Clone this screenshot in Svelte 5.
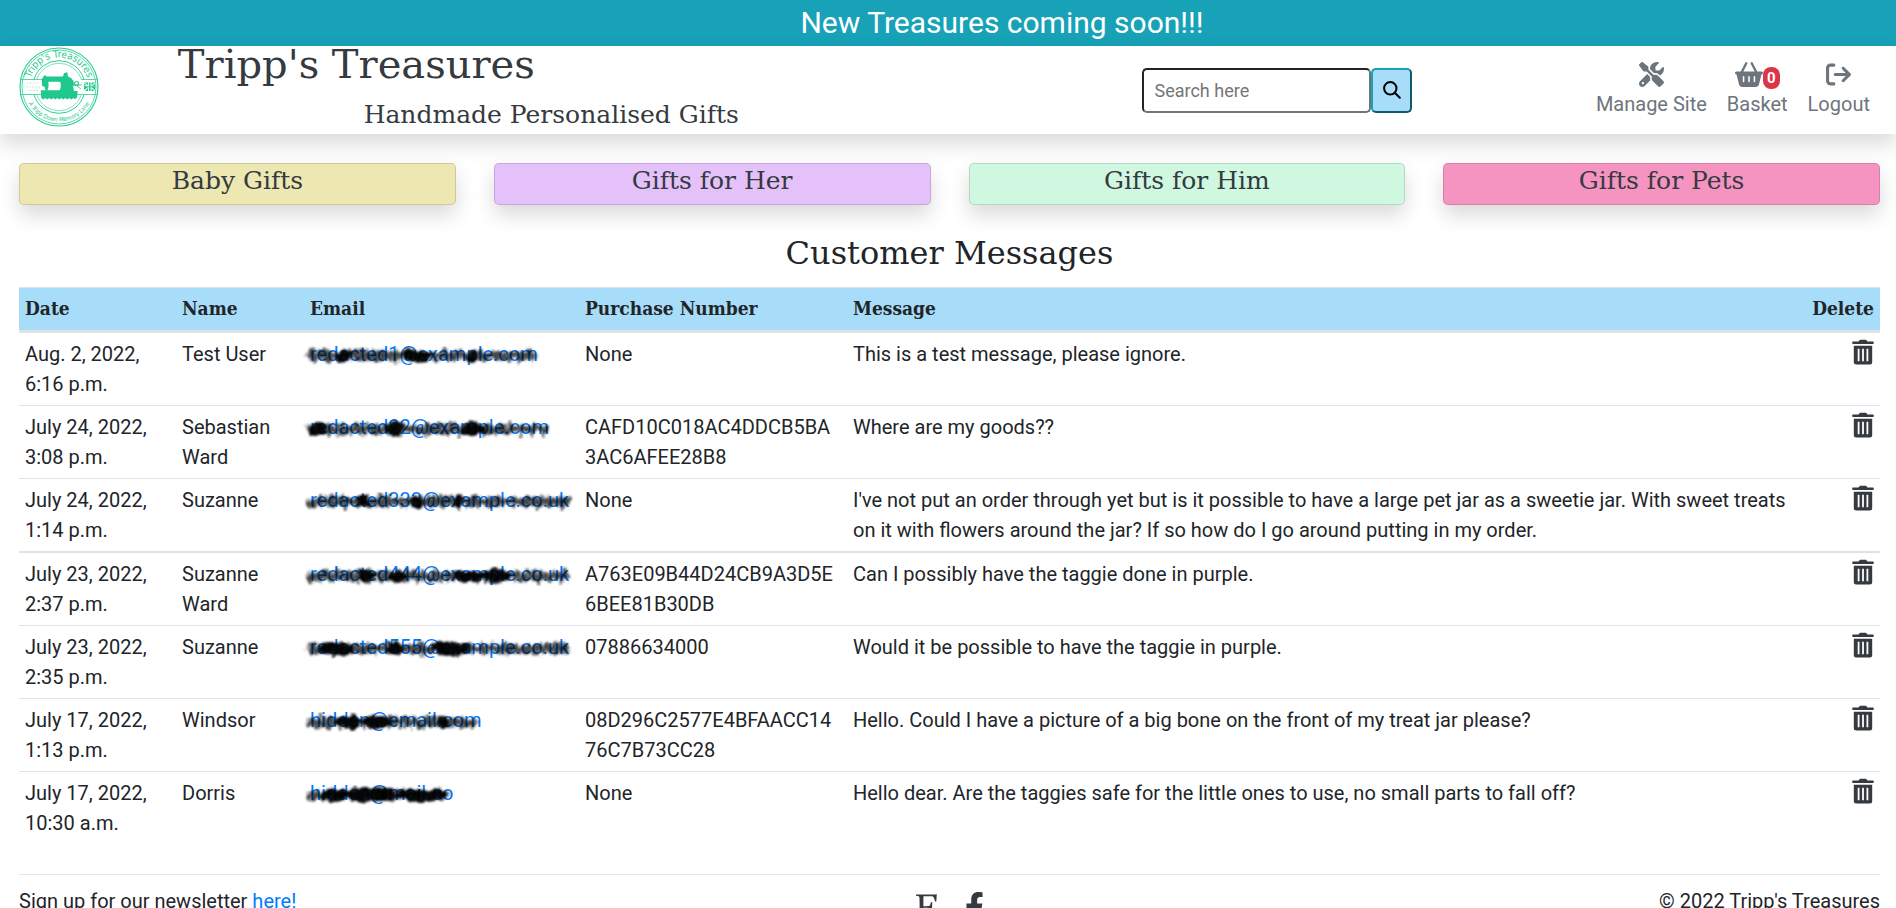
<script>
  const categories = [
    { label: 'Baby Gifts', tone: 'baby' },
    { label: 'Gifts for Her', tone: 'her' },
    { label: 'Gifts for Him', tone: 'him' },
    { label: 'Gifts for Pets', tone: 'pets' },
  ];

  // smear: width of the ink; blobs: [centre, half-width] of its darkest parts
  const messages = [
    { day: 'Aug. 2, 2022,', time: '6:16 p.m.', name: 'Test User', email: 'redacted1@example.com', smear: 238, blobs: [[36, 8], [110, 14], [165, 5]], ref: 'None', text: 'This is a test message, please ignore.' },
    { day: 'July 24, 2022,', time: '3:08 p.m.', name: 'Sebastian Ward', email: 'redacted22@example.com', smear: 248, blobs: [[10, 10], [86, 9], [165, 12]], ref: 'CAFD10C018AC4DDCB5BA3AC6AFEE28B8', text: 'Where are my goods??' },
    { day: 'July 24, 2022,', time: '1:14 p.m.', name: 'Suzanne', email: 'redacted333@example.co.uk', smear: 272, blobs: [[55, 6], [108, 6], [150, 5]], ref: 'None', text: "I've not put an order through yet but is it possible to have a large pet jar as a sweetie jar. With sweet treats on it with flowers around the jar? If so how do I go around putting in my order." },
    { day: 'July 23, 2022,', time: '2:37 p.m.', name: 'Suzanne Ward', email: 'redacted444@example.co.uk', smear: 270, blobs: [[60, 8], [90, 8], [160, 14], [186, 16]], ref: 'A763E09B44D24CB9A3D5E6BEE81B30DB', text: 'Can I possibly have the taggie done in purple.' },
    { day: 'July 23, 2022,', time: '2:35 p.m.', name: 'Suzanne', email: 'redacted555@example.co.uk', smear: 270, blobs: [[28, 16], [88, 7], [146, 16], [130, 6]], ref: '07886634000', text: 'Would it be possible to have the taggie in purple.' },
    { day: 'July 17, 2022,', time: '1:13 p.m.', name: 'Windsor', email: 'hidden@email.com', smear: 178, blobs: [[40, 12], [68, 14], [135, 6]], ref: '08D296C2577E4BFAACC1476C7B73CC28', text: 'Hello. Could I have a picture of a big bone on the front of my treat jar please?' },
    { day: 'July 17, 2022,', time: '10:30 a.m.', name: 'Dorris', email: 'hidden@mail.co', smear: 150, blobs: [[26, 13], [56, 22], [80, 8], [114, 26]], ref: 'None', text: 'Hello dear. Are the taggies safe for the little ones to use, no small parts to fall off?' },
  ];

  function scribble(width, seed) {
    let d = 'M8 18';
    for (let x = 10, i = 0; x < width; x += 3, i++) {
      const swing = 3 + ((i * 7 + seed * 5) % 4);
      d += ` L${x} ${i % 2 ? 18 - swing : 18 + swing}`;
    }
    return d;
  }
</script>

<div class="banner">New Treasures coming soon!!!</div>

<header class="top">
  <a class="logo" href="/" aria-label="Tripp's Treasures home">
    <svg viewBox="0 0 80 80" width="80" height="80">
      <defs>
        <path id="arc-top" d="M10.500 40a29.500 29.500 0 0 1 59 0" />
        <path id="arc-low" d="M5.500 40a34.500 34.500 0 0 0 69 0" />
      </defs>
      <g fill="none" stroke="#2fcf93">
        <circle cx="40" cy="40" r="39" stroke-width="1.200" />
        <circle cx="40" cy="40" r="37" stroke-width=".8" />
        <path d="M15 32.500A26 26 0 0 1 65 32.500M15 47.500A26 26 0 0 0 65 47.500" stroke-width="1" />
        <path d="M17.500 32.500A23.700 23.700 0 0 1 62.500 32.500M17.500 47.500A23.700 23.700 0 0 0 62.500 47.500" stroke-width=".6" />
        <path d="M2 32.500h21M2 47.500h20M62 32.500h16M58 47.500h20" stroke-width=".8" />
        <path d="M8 36h12M4 40h18M8 43.500h12" stroke-width=".6" stroke-dasharray="2 1" opacity=".5" />
      </g>
      <g fill="#1fc98b">
        <path d="M24.500 29.500l1.500-1.500 1.500 1.500h16.500l1-3.500 1.500 0v-.500l2 0 .5 4 3 1.500 2.500 3 .5 4-1 1 1 5h3.500v2.500l-.5 4-2 1.800-1.800-1.300-2 1.500-2-1.500-2 1.500-2-1.500-2 1.500-2-1.500-2 1.500-2-1.500-2 1.500-2-1.500-2 1.500-2-1.500-2 1.500-2-1.500-2 1.500-2-1.800-.5-7.500h19l1-3v-4.500l-1.500-1H29.500v5l-1 3.500h-2l-1-3.500-2.500-1v-7z" />
        <path d="M65 35.500h4v2.500zM65 36.500l3 2h-3zM70 35.500h1.500v3.500H70zM76 35.500h-3.500v3zM76 37v2h-3zM65 40.200h4L65 43zM69 41v3h-3zM70 40.200h1.500V44H70zM72.500 40.200H76V43zM72.500 41.500l3 2.500h-3zM64.500 39.200h12v1h-12z" />
      </g>
      <g fill="none" stroke="#1fc98b">
        <circle cx="57.500" cy="36.500" r="2" stroke-width="1.200" /><path d="M54 38h9M58 39l4 3" stroke-width=".8" />
      </g>
      <text class="logo-top"><textPath href="#arc-top" startOffset="50%" text-anchor="middle">Tripp's Treasures</textPath></text>
      <text class="logo-low"><textPath href="#arc-low" startOffset="50%" text-anchor="middle">A Tripp Down Memory Lane</textPath></text>
    </svg>
  </a>

  <div class="brand">
    <h1>Tripp's Treasures</h1>
    <p>Handmade Personalised Gifts</p>
  </div>

  <form class="search" onsubmit={(e) => e.preventDefault()}>
    <input type="text" placeholder="Search here" aria-label="Search here" />
    <button type="submit" aria-label="Search">
      <svg viewBox="0 0 18 18" width="18" height="18" fill="none" stroke="#000" stroke-width="2" stroke-linecap="round">
        <circle cx="7.300" cy="7.300" r="6.200" /><path d="M11.800 11.800L16.800 16.800" />
      </svg>
    </button>
  </form>

  <nav class="account">
    <a href="/manage">
      <span class="icon"><svg viewBox="0 0 512 512" width="25" height="25"><path d="M78.600 5C69.100-2.400 55.600-1.500 47 7L7 47c-8.500 8.500-9.400 22-2.100 31.600l80 104c4.500 5.900 11.600 9.400 19 9.400l54.100 0 109 109c-14.700 29-10 65.400 14.300 89.600l112 112c12.500 12.500 32.800 12.500 45.300 0l64-64c12.500-12.500 12.500-32.800 0-45.300l-112-112c-24.200-24.200-60.600-29-89.600-14.300l-109-109 0-54.100c0-7.500-3.500-14.500-9.400-19L78.600 5zM19.900 396.100C7.200 408.800 0 426.100 0 444.100C0 481.600 30.400 512 67.900 512c18 0 35.300-7.200 48-19.900L233.700 374.300c-7.800-20.900-9-43.600-3.600-65.100l-61.700-61.700L19.900 396.100zM512 144c0-10.500-1.100-20.700-3.200-30.500c-2.400-11.200-16.100-14.100-24.200-6l-63.900 63.900c-3 3-7.100 4.700-11.300 4.700L352 176c-8.800 0-16-7.200-16-16l0-57.400c0-4.200 1.700-8.300 4.700-11.300l63.900-63.900c8.100-8.100 5.200-21.800-6-24.200C388.700 1.100 378.500 0 368 0C288.500 0 224 64.500 224 144l0 .8 85.300 85.300c36-9.100 75.800 .5 104 28.700L429 274.500c49-23 83-72.800 83-130.500zM56 432a24 24 0 1 1 48 0 24 24 0 1 1 -48 0z" /></svg></span>
      <span>Manage Site</span>
    </a>
    <a href="/basket">
      <span class="icon"><svg viewBox="0 0 576 512" width="28" height="25"><path d="M253.300 35.100c6.100-11.800 1.500-26.300-10.200-32.400s-26.300-1.500-32.400 10.200L117.600 192 32 192c-17.700 0-32 14.300-32 32s14.300 32 32 32L83.900 463.500C91 492 116.600 512 146 512L430 512c29.400 0 55-20 62.100-48.500L544 256c17.700 0 32-14.300 32-32s-14.300-32-32-32l-85.600 0L365.300 12.900C359.200 1.200 344.700-3.400 332.900 2.700s-16.300 20.600-10.200 32.400L404.300 192l-232.600 0L253.300 35.100zM192 304l0 96c0 8.800-7.200 16-16 16s-16-7.200-16-16l0-96c0-8.800 7.200-16 16-16s16 7.200 16 16zm96-16c8.800 0 16 7.200 16 16l0 96c0 8.800-7.200 16-16 16s-16-7.200-16-16l0-96c0-8.800 7.200-16 16-16zm128 16l0 96c0 8.800-7.200 16-16 16s-16-7.200-16-16l0-96c0-8.800 7.200-16 16-16s16 7.200 16 16z" /></svg><span class="badge">0</span></span>
      <span>Basket</span>
    </a>
    <a href="/logout">
      <span class="icon"><svg viewBox="0 0 512 512" width="25" height="25"><path d="M502.600 278.600c12.500-12.500 12.500-32.800 0-45.300l-128-128c-12.500-12.500-32.800-12.500-45.300 0s-12.500 32.800 0 45.300L402.700 224 192 224c-17.700 0-32 14.300-32 32s14.300 32 32 32l210.700 0-73.400 73.400c-12.500 12.500-12.500 32.800 0 45.300s32.800 12.500 45.300 0l128-128zM160 96c17.700 0 32-14.300 32-32s-14.300-32-32-32L96 32C43 32 0 75 0 128L0 384c0 53 43 96 96 96l64 0c17.700 0 32-14.300 32-32s-14.300-32-32-32l-64 0c-17.700 0-32-14.300-32-32l0-256c0-17.700 14.300-32 32-32l64 0z" /></svg></span>
      <span>Logout</span>
    </a>
  </nav>
</header>

<main>
  <nav class="categories">
    {#each categories as c}
      <a class={c.tone} href="/gifts">{c.label}</a>
    {/each}
  </nav>

  <h2>Customer Messages</h2>

  <table>
    <colgroup>
      <col class="c-date" /><col class="c-name" /><col class="c-email" /><col class="c-ref" /><col /><col class="c-del" />
    </colgroup>
    <thead>
      <tr><th>Date</th><th>Name</th><th>Email</th><th>Purchase Number</th><th>Message</th><th class="end">Delete</th></tr>
    </thead>
    <tbody>
      {#each messages as m, i}
        <tr>
          <td>{m.day} {m.time}</td>
          <td>{m.name}</td>
          <td>
            <span class="hidden-email">
              <a href="/contact">{m.email}</a>
              <svg class="ink" width={m.smear + 12} height="36" aria-hidden="true">
                <filter id="rough{i}" x="-5%" y="-20%" width="110%" height="140%">
                  <feTurbulence type="fractalNoise" baseFrequency=".12" numOctaves="2" seed={i + 3} />
                  <feDisplacementMap in="SourceGraphic" scale="10" xChannelSelector="R" yChannelSelector="G" />
                  <feGaussianBlur stdDeviation="1.100" />
                </filter>
                <g filter="url(#rough{i})">
                  <path d={scribble(m.smear, i)} fill="none" stroke="#000" stroke-width="3" stroke-linejoin="round" opacity=".6" />
                  <path d="M10 18H{m.smear - 4}" stroke="#000" stroke-width="9" stroke-linecap="round" opacity=".35" />
                  {#each m.blobs as [x, r]}
                    <ellipse cx={x + 8} cy="18" rx={r} ry="7" opacity=".9" />
                  {/each}
                </g>
              </svg>
            </span>
          </td>
          <td class="ref">{m.ref}</td>
          <td>{m.text}</td>
          <td class="end">
            <button class="delete" aria-label="Delete message">
              <svg viewBox="0 0 22 26" width="22" height="26" fill="#343a40">
                <path d="M1 2.500h5.500L8 .8h6l1.500 1.700H21q.8 0 .8 1.200T21 5H1Q.2 5 .2 3.700T1 2.500z" />
                <path fill-rule="evenodd" d="M1.800 6.800h18.400V23q0 2.500-2.500 2.500H4.300Q1.800 25.500 1.800 23zM5.700 9.800v12.400h1.800V9.800zM10.100 9.800v12.400h1.800V9.800zM14.500 9.800v12.400h1.800V9.800z" />
              </svg>
            </button>
          </td>
        </tr>
      {/each}
    </tbody>
  </table>

  <footer>
    <p>Sign up for our newsletter <a href="/newsletter">here!</a></p>
    <div class="social">
      <a href="/etsy" aria-label="Etsy"><svg viewBox="0 0 384 512" width="22" height="30"><path d="M384 348c-1.750 10.750-13.750 110-15.500 132-117.879-4.299-219.895-4.743-368.500 0v-25.500c45.457-8.948 60.627-8.019 61-35.250 1.793-72.322 3.524-244.143 0-322-1.029-28.460-12.130-26.765-61-36v-25.500c73.886 2.358 255.933 8.551 362.999-3.750-3.500 38.250-7.750 126.500-7.750 126.500H332C320.947 115.665 313.241 68 277.250 68h-137c-10.250 0-10.750 3.500-10.750 9.750V241.500c58 .5 88.500-2.500 88.500-2.500 29.770-.951 27.560-8.502 40.750-65.251h25.750c-4.407 101.351-3.910 61.829-1.750 160.250H257c-9.155-40.086-9.065-61.045-39.501-61.500 0 0-21.500-2-88-2v139c0 26 14.250 38.250 44.250 38.250H263c63.636 0 66.564-24.996 98.751-99.750H384z" /></svg></a>
      <a href="/facebook" aria-label="Facebook"><svg viewBox="0 0 320 512" width="19" height="30"><path d="M279.140 288l14.220-92.660h-88.910v-60.130c0-25.350 12.420-50.060 52.240-50.060h40.420V6.260S260.430 0 225.360 0c-73.220 0-121.080 44.380-121.080 124.720v70.620H22.890V288h81.390v224h100.170V288z" /></svg></a>
    </div>
    <p class="copy">© 2022 Tripp's Treasures</p>
  </footer>
</main>

<style>
  :global(body) {
    margin: 0;
    background: #fff;
    color: #212529;
    font: 20px/30px Roboto, sans-serif;
  }
  a { text-decoration: none; color: #007bff; }
  h1, h2, p { margin: 0; font-weight: 400; }
  svg { display: block; }

  .banner {
    background: #17a2b8;
    color: #fff;
    text-align: center;
    font-size: 30px;
    line-height: 46px;
    padding-left: 108px;
  }

  .top {
    display: grid;
    grid-template-columns: 1fr 5fr 3fr 3fr;
    min-height: 88px;
    padding: 0 19px;
    box-shadow: 0 10px 20px rgba(0, 0, 0, .15);
  }
  .logo { width: 80px; padding-top: 1px; }
  .logo-top, .logo-low { fill: #1fc98b; font-family: "DejaVu Sans Condensed", "DejaVu Sans", sans-serif; }
  .logo-top { font-size: 10px; }
  .logo-low { font-size: 6px; }

  .brand {
    justify-self: start;
    width: 561px;
    padding-left: 4px;
    color: #343a40;
    font-family: "DejaVu Serif", serif;
  }
  .brand h1 { font-size: 40px; line-height: 36px; }
  .brand p { font-size: 25px; line-height: 30px; margin-top: 18px; text-align: right; }

  .search {
    display: flex;
    align-items: center;
    justify-content: flex-end;
  }
  .search input {
    box-sizing: border-box;
    width: 229px;
    height: 45px;
    padding: 0 10px;
    border: 2px solid;
    border-color: #212529 #6c757d #6c757d #212529;
    border-radius: 5px;
    font: 18px Roboto, sans-serif;
  }
  .search input::placeholder { color: #757575; }
  .search button {
    display: grid;
    place-items: center;
    width: 41px;
    height: 45px;
    padding: 0;
    border: 2px solid;
    border-color: #17a2b8 #0f5b68 #0f5b68 #17a2b8;
    border-radius: 5px;
    background: #a7ddf9;
  }

  .account {
    display: flex;
    justify-content: flex-end;
    gap: 20px;
    padding: 13px 7px 0 0;
  }
  .account a {
    display: flex;
    flex-direction: column;
    align-items: center;
    color: #6c757d;
  }
  .account svg, .social svg { fill: currentColor; }
  .icon { display: flex; align-items: center; height: 30px; }
  .badge {
    align-self: flex-end;
    box-sizing: border-box;
    width: 17px;
    height: 22px;
    border-radius: 8px;
    background: #dc3545;
    color: #fff;
    font-size: 15px;
    font-weight: 700;
    line-height: 22px;
    text-align: center;
  }

  main { padding: 29px 16px 0 19px; }
  .categories {
    display: grid;
    grid-template-columns: repeat(4, 1fr);
    gap: 38px;
  }
  .categories a {
    box-sizing: border-box;
    height: 42px;
    border: 1px solid rgba(0, 0, 0, .13);
    border-radius: 5px;
    color: #343a40;
    font: 25px/34px "DejaVu Serif", serif;
    text-align: center;
    box-shadow: 0 10px 20px rgba(0, 0, 0, .15);
  }
  .baby { background: #ede7b1; }
  .her { background: #e4c1f9; }
  .him { background: #d0f8e1; }
  .pets { background: #f694c1; }

  h2 {
    margin: 28px 0 14px;
    font: 32px/40px "DejaVu Serif", serif;
    text-align: center;
  }

  table {
    width: 100%;
    table-layout: fixed;
    border-collapse: separate;
    border-spacing: 0;
  }
  .c-date { width: 157px; }
  .c-name { width: 128px; }
  .c-email { width: 275px; }
  .c-ref { width: 268px; }
  .c-del { width: 78px; }
  th {
    padding: 5px 6px 7px;
    border-top: 1px solid #dee2e6;
    border-bottom: 3px solid #dee2e6;
    background: #a7ddf9;
    text-align: left;
    white-space: nowrap;
    font: 700 19px/30px "DejaVu Serif Condensed", "DejaVu Serif", serif;
  }
  td {
    padding: 6px;
    vertical-align: top;
    border-bottom: 1px solid #dee2e6;
  }
  tr:nth-child(3) td { border-bottom-width: 2px; }
  tr:last-child td { border-bottom: 0; }
  .ref { overflow-wrap: anywhere; }
  th.end, td.end { text-align: right; }
  .hidden-email { position: relative; display: inline-block; white-space: nowrap; }
  .ink { position: absolute; left: -10px; top: -1px; }
  .delete { padding: 0; border: 0; background: none; }

  footer {
    display: grid;
    grid-template-columns: 1fr auto 1fr;
    margin-top: 30px;
    padding: 11px 0 20px;
    border-top: 1px solid #e5e5e5;
  }
  .social { display: flex; gap: 27px; padding-top: 6px; }
  .social a { color: #343a40; }
  .copy { text-align: right; }
</style>
